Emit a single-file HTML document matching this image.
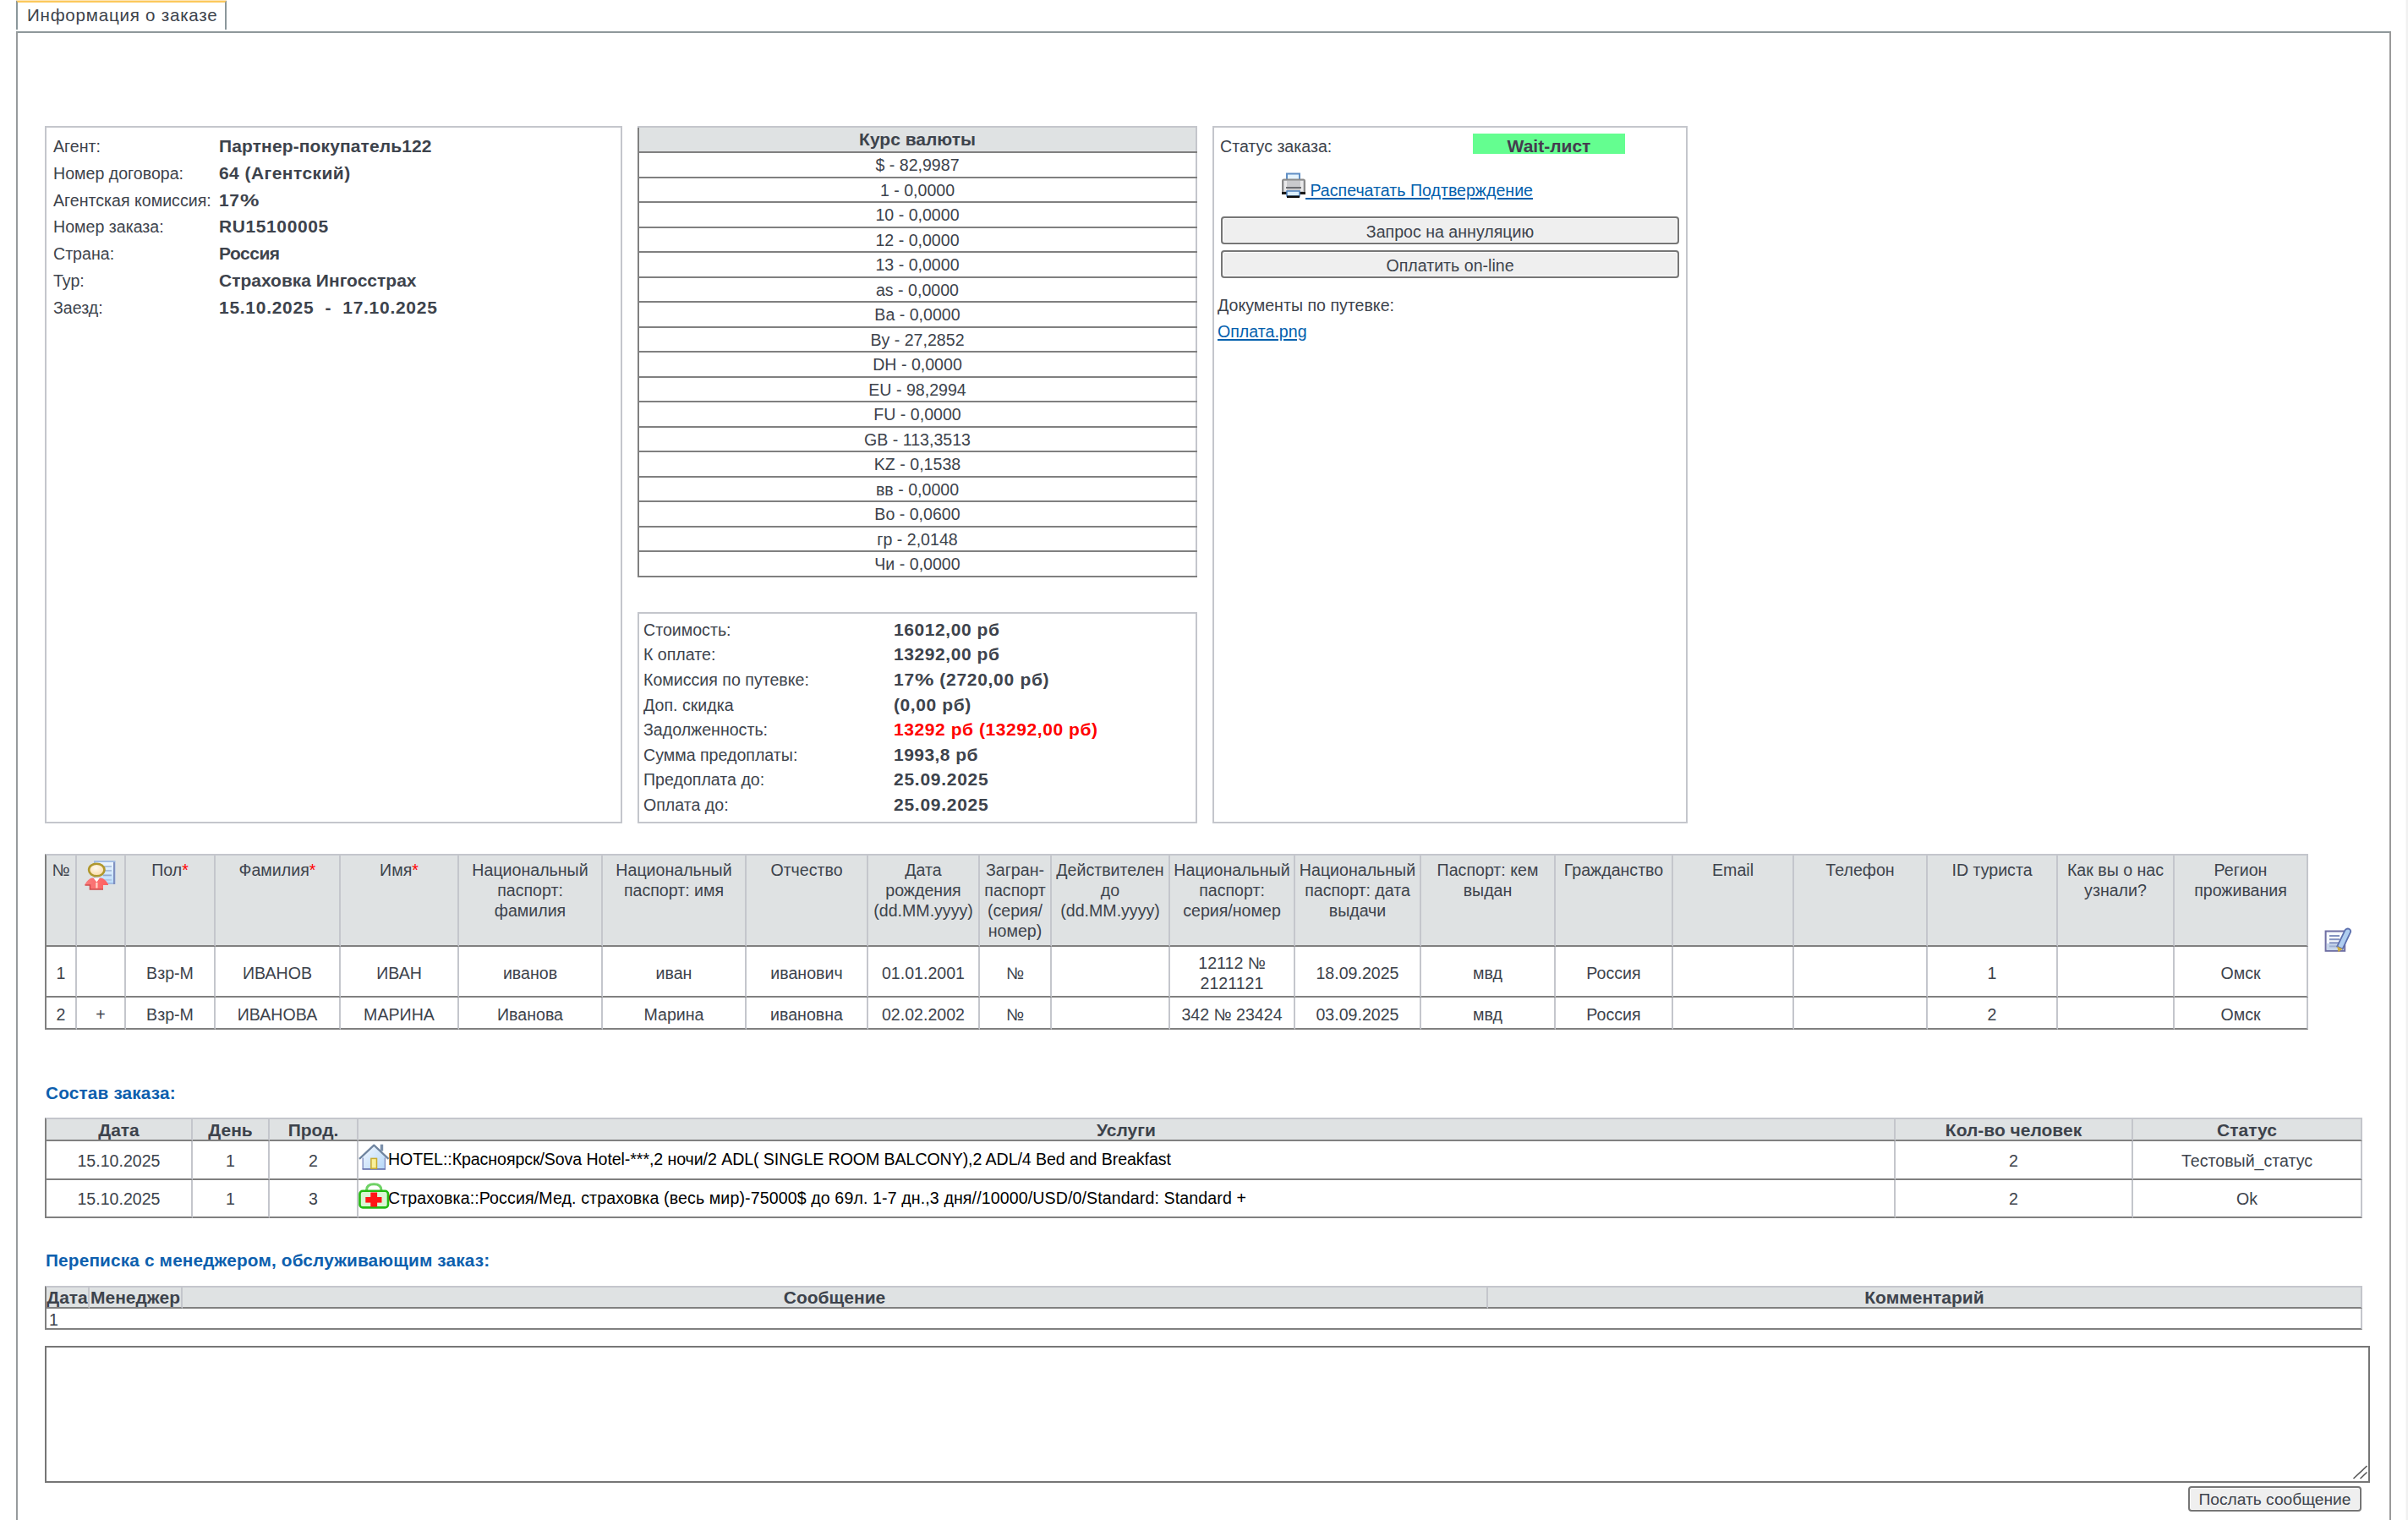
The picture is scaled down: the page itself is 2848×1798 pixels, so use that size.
<!DOCTYPE html>
<html><head><meta charset="utf-8">
<style>
*{box-sizing:border-box}
html,body{margin:0;padding:0;background:#fff;width:2848px;height:1798px;overflow:hidden}
body{font-family:"Liberation Sans",sans-serif;font-size:19.6px;color:#3d434c;position:relative}
.a{position:absolute;white-space:nowrap;line-height:30px}
.b{font-weight:bold;font-size:21px}
.box{position:absolute;border:2px solid #c4c6cc}
#tab{position:absolute;left:19px;top:0;width:249px;height:35px;border-left:2px solid #8b979b;border-right:2px solid #8b979b;border-top:3px solid #fcc95c}
#main{position:absolute;left:19px;top:37px;width:2809px;height:1900px;border:2px solid #8f989b;border-right-color:#9a9a9a;border-left-color:#979b9d}
table{border-collapse:collapse;position:absolute;table-layout:fixed}
td,th{padding:0;overflow:hidden}
.cur{left:754px;top:149px;width:662px;border-top:2px solid #c4c6cc;border-right:2px solid #c4c6cc;border-left:2px solid #808080}
.cur th{background:#dfe2e3;font-weight:bold;font-size:21px;height:30px;border-bottom:2px solid #808080;text-align:center}
.cur td{height:29.5px;border-bottom:2px solid #808080;text-align:center;padding-top:2px}
.btn{position:absolute;background:#efefef;border:2px solid #767676;border-radius:4px;box-shadow:inset 0 0 0 1px #fafafa;text-align:center;line-height:28px;white-space:nowrap}
a{color:#0360ad;text-decoration:underline;text-underline-offset:2px;text-decoration-thickness:2px}
.tg{position:absolute;border-left:2px solid #808080;border-top:2px solid #c4c6cc}
.r{display:flex}
.r>div{border-right:2px solid #c4c6cc;border-bottom:2px solid #808080;text-align:center;flex:none;overflow:hidden}
.hd>div{background:#dfe2e3}
.tt .hd>div{line-height:24px;padding-top:5px}
.tt .dr>div{display:flex;align-items:center;justify-content:center;line-height:24px;padding-top:3px}
.st .hd>div{font-weight:bold;font-size:21px;line-height:24px;padding-top:1px}
.st .dr>div{display:flex;align-items:center;justify-content:center;line-height:24px;padding-top:1px}
.sec{position:absolute;color:#0d5fae;font-weight:bold;font-size:20.8px;white-space:nowrap;line-height:24px;letter-spacing:0.15px}
</style></head><body>
<div id="tab"></div><div style="position:absolute;left:19px;top:0;width:249px;height:1px;background:#fde6b8"></div>
<div class="a" style="left:32px;top:3px;font-size:20.6px;letter-spacing:0.75px">Информация о заказе</div>
<div id="main"></div>
<div style="position:absolute;left:2845px;top:0;width:1px;height:1798px;background:#f8f8f8"></div><div style="position:absolute;left:2846px;top:0;width:2px;height:1798px;background:#f1f1f1"></div>

<!-- left info panel -->
<div class="box" style="left:53px;top:149px;width:683px;height:825px"></div>
<div class="a" style="left:63px;top:158px">Агент:</div><div class="a b" style="left:259px;top:158px;letter-spacing:0.12px">Партнер-покупатель122</div>
<div class="a" style="left:63px;top:190px">Номер договора:</div><div class="a b" style="left:259px;top:190px;letter-spacing:0.44px">64 (Агентский)</div>
<div class="a" style="left:63px;top:222px">Агентская комиссия:</div><div class="a b" style="left:259px;top:222px;letter-spacing:0.6px">17<span style="display:inline-block;transform:scaleX(1.2);transform-origin:0 0;margin-right:3.7px">%</span></div>
<div class="a" style="left:63px;top:253px">Номер заказа:</div><div class="a b" style="left:259px;top:253px;letter-spacing:0.6px">RU15100005</div>
<div class="a" style="left:63px;top:285px">Страна:</div><div class="a b" style="left:259px;top:285px;letter-spacing:-0.5px">Россия</div>
<div class="a" style="left:63px;top:317px">Тур:</div><div class="a b" style="left:259px;top:317px">Страховка Ингосстрах</div>
<div class="a" style="left:63px;top:349px">Заезд:</div><div class="a b" style="left:259px;top:349px;letter-spacing:0.72px">15.10.2025 &nbsp;- &nbsp;17.10.2025</div>

<!-- currency -->
<table class="cur">
<tr><th>Курс валюты</th></tr>
<tr><td>$ - 82,9987</td></tr>
<tr><td>1 - 0,0000</td></tr>
<tr><td>10 - 0,0000</td></tr>
<tr><td>12 - 0,0000</td></tr>
<tr><td>13 - 0,0000</td></tr>
<tr><td>as - 0,0000</td></tr>
<tr><td>Ba - 0,0000</td></tr>
<tr><td>By - 27,2852</td></tr>
<tr><td>DH - 0,0000</td></tr>
<tr><td>EU - 98,2994</td></tr>
<tr><td>FU - 0,0000</td></tr>
<tr><td>GB - 113,3513</td></tr>
<tr><td>KZ - 0,1538</td></tr>
<tr><td>вв - 0,0000</td></tr>
<tr><td>Bo - 0,0600</td></tr>
<tr><td>гр - 2,0148</td></tr>
<tr><td>Чи - 0,0000</td></tr>
</table>

<!-- cost box -->
<div class="box" style="left:754px;top:724px;width:662px;height:250px"></div>
<div class="a" style="left:761px;top:730px">Стоимость:</div><div class="a b" style="left:1057px;top:730px;letter-spacing:0.57px">16012,00 рб</div>
<div class="a" style="left:761px;top:759px">К оплате:</div><div class="a b" style="left:1057px;top:759px;letter-spacing:0.57px">13292,00 рб</div>
<div class="a" style="left:761px;top:789px">Комиссия по путевке:</div><div class="a b" style="left:1057px;top:789px;letter-spacing:0.7px">17<span style="display:inline-block;transform:scaleX(1.2);transform-origin:0 0;margin-right:3.7px">%</span> (2720,00 рб)</div>
<div class="a" style="left:761px;top:819px">Доп. скидка</div><div class="a b" style="left:1057px;top:819px;letter-spacing:0.6px">(0,00 рб)</div>
<div class="a" style="left:761px;top:848px">Задолженность:</div><div class="a b" style="left:1057px;top:848px;color:#ff0000;letter-spacing:0.57px">13292 рб (13292,00 рб)</div>
<div class="a" style="left:761px;top:878px">Сумма предоплаты:</div><div class="a b" style="left:1057px;top:878px;letter-spacing:0.45px">1993,8 рб</div>
<div class="a" style="left:761px;top:907px">Предоплата до:</div><div class="a b" style="left:1057px;top:907px;letter-spacing:0.73px">25.09.2025</div>
<div class="a" style="left:761px;top:937px">Оплата до:</div><div class="a b" style="left:1057px;top:937px;letter-spacing:0.73px">25.09.2025</div>

<!-- right panel -->
<div class="box" style="left:1434px;top:149px;width:562px;height:825px"></div>
<div class="a" style="left:1443px;top:158px">Статус заказа:</div>
<div style="position:absolute;left:1742px;top:158px;width:180px;height:24px;background:#64fe90"></div>
<div class="a b" style="left:1742px;top:158px;width:180px;text-align:center;color:#453c4f">Wait-лист</div>
<svg style="position:absolute;left:1514px;top:203px" width="32" height="32" viewBox="0 0 32 32">
 <rect x="8" y="2.5" width="15" height="9" fill="#e4f3fd" stroke="#5f8ec4" stroke-width="2"/>
 <rect x="3" y="9.5" width="26" height="16" rx="1.5" fill="#c9cacd" stroke="#8a8a8a" stroke-width="2"/>
 <rect x="5" y="11" width="3" height="12" fill="#e9e9ea"/><rect x="24" y="11" width="3" height="12" fill="#e9e9ea"/>
 <rect x="7" y="18" width="18" height="2" fill="#6a6c70"/>
 <rect x="2" y="24" width="28" height="3" fill="#1a1a1a"/>
 <rect x="8" y="23" width="15" height="6" fill="#dcefff" stroke="#4e83c0" stroke-width="1.5"/>
 <rect x="8" y="28.5" width="15" height="2.5" fill="#0b0b0b"/>
</svg>
<div class="a" style="left:1544px;top:210px"><a>&nbsp;Распечатать Подтверждение</a></div>
<div class="btn" style="left:1444px;top:256px;width:542px;height:33px;line-height:32px">Запрос на аннуляцию</div>
<div class="btn" style="left:1444px;top:296px;width:542px;height:33px;line-height:32px">Оплатить on-line</div>
<div class="a" style="left:1440px;top:346px">Документы по путевке:</div>
<div class="a" style="left:1440px;top:377px"><a>Оплата.png</a></div>

<!-- tourists table -->
<div class="tg tt" style="left:53px;top:1010px;width:2677px">
 <div class="r hd" style="height:108px">
  <div style="width:36px">№</div>
  <div style="width:58px"></div>
  <div style="width:106px">Пол<span style="color:#f00">*</span></div>
  <div style="width:148px">Фамилия<span style="color:#f00">*</span></div>
  <div style="width:140px">Имя<span style="color:#f00">*</span></div>
  <div style="width:170px">Национальный<br>паспорт:<br>фамилия</div>
  <div style="width:170px">Национальный<br>паспорт: имя</div>
  <div style="width:144px">Отчество</div>
  <div style="width:132px">Дата<br>рождения<br>(dd.MM.yyyy)</div>
  <div style="width:85px">Загран-<br>паспорт<br>(серия/<br>номер)</div>
  <div style="width:140px">Действителен<br>до<br>(dd.MM.yyyy)</div>
  <div style="width:148px">Национальный<br>паспорт:<br>серия/номер</div>
  <div style="width:149px">Национальный<br>паспорт: дата<br>выдачи</div>
  <div style="width:159px">Паспорт: кем<br>выдан</div>
  <div style="width:139px">Гражданство</div>
  <div style="width:143px">Email</div>
  <div style="width:158px">Телефон</div>
  <div style="width:154px">ID туриста</div>
  <div style="width:138px">Как вы о нас<br>узнали?</div>
  <div style="width:158px">Регион<br>проживания</div>
 </div>
 <div class="r dr" style="height:60px">
  <div style="width:36px">1</div><div style="width:58px"></div><div style="width:106px">Взр-М</div><div style="width:148px">ИВАНОВ</div><div style="width:140px">ИВАН</div><div style="width:170px">иванов</div><div style="width:170px">иван</div><div style="width:144px">иванович</div><div style="width:132px">01.01.2001</div><div style="width:85px">№</div><div style="width:140px"></div><div style="width:148px">12112 №<br>2121121</div><div style="width:149px">18.09.2025</div><div style="width:159px">мвд</div><div style="width:139px">Россия</div><div style="width:143px"></div><div style="width:158px"></div><div style="width:154px">1</div><div style="width:138px"></div><div style="width:158px">Омск</div>
 </div>
 <div class="r dr" style="height:38px">
  <div style="width:36px">2</div><div style="width:58px">+</div><div style="width:106px">Взр-М</div><div style="width:148px">ИВАНОВА</div><div style="width:140px">МАРИНА</div><div style="width:170px">Иванова</div><div style="width:170px">Марина</div><div style="width:144px">ивановна</div><div style="width:132px">02.02.2002</div><div style="width:85px">№</div><div style="width:140px"></div><div style="width:148px">342 № 23424</div><div style="width:149px">03.09.2025</div><div style="width:159px">мвд</div><div style="width:139px">Россия</div><div style="width:143px"></div><div style="width:158px"></div><div style="width:154px">2</div><div style="width:138px"></div><div style="width:158px">Омск</div>
 </div>
</div>
<!-- person icon -->
<svg style="position:absolute;left:100px;top:1017px" width="37" height="36" viewBox="0 0 37 36">
 <defs><linearGradient id="pg" x1="0" y1="0" x2="0" y2="1"><stop offset="0" stop-color="#eef5fe"/><stop offset="1" stop-color="#b9dcfb"/></linearGradient>
 <radialGradient id="fg" cx="0.45" cy="0.35" r="0.6"><stop offset="0" stop-color="#fffaf0"/><stop offset="1" stop-color="#fbdcaa"/></radialGradient>
 <linearGradient id="bg2" x1="0" y1="0" x2="1" y2="0"><stop offset="0" stop-color="#f77d7d"/><stop offset="1" stop-color="#ff6060"/></linearGradient></defs>
 <rect x="12" y="2" width="23.5" height="26" fill="url(#pg)" stroke="#a3bde3" stroke-width="2"/>
 <rect x="34" y="3" width="2" height="26" fill="#8090c0"/>
 <rect x="22" y="7" width="10" height="1.8" fill="#a9bedd"/><rect x="22" y="12" width="10" height="1.8" fill="#a9bedd"/><rect x="22" y="17.5" width="10" height="1.8" fill="#93a9d2"/><rect x="22" y="23" width="10" height="1.8" fill="#b0c8e6"/>
 <ellipse cx="14.3" cy="12" rx="9.2" ry="7.3" fill="url(#fg)" stroke="#b0982e" stroke-width="2.6"/>
 <path d="M9 21.5 L19.5 21.5 Q24.5 22.5 28 29 L28 30 L22 30 L22 35 L6.5 35 L6.5 30 L0.5 30 L0.5 29 Q4 22.5 9 21.5 Z" fill="url(#bg2)"/>
 <path d="M0.5 30 L6.5 30 L6.5 35 L22 35" fill="none" stroke="#d24c4c" stroke-width="1.6"/>
 <path d="M10.5 21.5 L14.3 26.5 L18 21.5 Z" fill="#ffffff"/>
 <rect x="13.3" y="27" width="2.2" height="6.5" fill="#ffd5c8"/>
</svg>
<!-- edit icon -->
<svg style="position:absolute;left:2746px;top:1096px" width="36" height="34" viewBox="0 0 36 34">
 <rect x="4.6" y="5.5" width="22.6" height="23.3" fill="#f6f9fd" stroke="#6e6ea3" stroke-width="2"/>
 <rect x="6" y="20" width="19.5" height="8" fill="#c6d5ea"/>
 <rect x="9" y="10" width="12" height="2" fill="#8392c0"/><rect x="9" y="14.2" width="12" height="2" fill="#8392c0"/><rect x="9" y="18.3" width="11" height="2" fill="#8392c0"/><rect x="9" y="22.4" width="9" height="2" fill="#9fb0d2"/>
 <path d="M27.6 4.2 Q30 1.6 32.6 3 Q35 4.6 33.8 7.2 L24.6 26.6 L18.2 23.6 Z" fill="#aecdf0" stroke="#5c6fae" stroke-width="1.8"/>
 <path d="M18.2 23.6 L24.6 26.6 L19.6 30.2 Z" fill="#cfae3c"/>
</svg>

<!-- services -->
<div class="sec" style="left:54px;top:1281px">Состав заказа:</div>
<div class="tg st" style="left:53px;top:1322px;width:2741px">
 <div class="r hd" style="height:26px">
  <div style="width:173px">Дата</div><div style="width:91px">День</div><div style="width:105px">Прод.</div><div style="width:1818px">Услуги</div><div style="width:281px">Кол-во человек</div><div style="width:271px">Статус</div>
 </div>
 <div class="r dr" style="height:46px">
  <div style="width:173px">15.10.2025</div><div style="width:91px">1</div><div style="width:105px">2</div>
  <div style="width:1818px;justify-content:flex-start!important;color:#000;padding-left:35px"><span style="position:relative;top:-1.5px;letter-spacing:-0.08px">HOTEL::Красноярск/Sova Hotel-***,2 ночи/2 ADL( SINGLE ROOM BALCONY),2 ADL/4 Bed and Breakfast</span></div>
  <div style="width:281px">2</div><div style="width:271px">Тестовый_статус</div>
 </div>
 <div class="r dr" style="height:45px">
  <div style="width:173px">15.10.2025</div><div style="width:91px">1</div><div style="width:105px">3</div>
  <div style="width:1818px;justify-content:flex-start!important;color:#000;padding-left:35px"><span style="position:relative;top:-1px;letter-spacing:0.11px">Страховка::Россия/Мед. страховка (весь мир)-75000$ до 69л. 1-7 дн.,3 дня//10000/USD/0/Standard: Standard +</span></div>
  <div style="width:281px">2</div><div style="width:271px">Ok</div>
 </div>
</div>


<!-- service icons -->
<svg style="position:absolute;left:424px;top:1352px" width="37" height="33" viewBox="0 0 37 33">
 <defs><linearGradient id="hg" x1="0" y1="0" x2="1" y2="1"><stop offset="0" stop-color="#f2f8ff"/><stop offset="1" stop-color="#b5d6f7"/></linearGradient></defs>
 <path d="M4.6 17 L18.3 4 L32 17 L32 31.2 L4.6 31.2 Z" fill="url(#hg)"/>
 <path d="M5.2 17.5 L5.2 30.6 L31.4 30.6 L31.4 17.5" fill="none" stroke="#7d89bd" stroke-width="1.3"/>
 <rect x="4.6" y="30" width="27.4" height="1.8" fill="#6f7bb2"/>
 <path d="M1 18.9 L18.3 2.6 L35.5 18.9" fill="none" stroke="#6f849f" stroke-width="2.2" stroke-linejoin="round"/>
 <rect x="25.8" y="1.7" width="3.4" height="7.8" fill="#7b90ab"/>
 <rect x="14.9" y="18.4" width="6.6" height="11.8" fill="#f9f09a" stroke="#c7aa2e" stroke-width="1.5"/>
</svg>
<svg style="position:absolute;left:424px;top:1398px" width="37" height="33" viewBox="0 0 37 33">
 <path d="M9.5 10 Q9.5 2.8 18.2 2.8 Q27 2.8 27 10" fill="none" stroke="#6fd266" stroke-width="3"/>
 <rect x="1.5" y="10.8" width="33.5" height="19.6" rx="3.5" fill="#d9f6d4" stroke="#22bb11" stroke-width="2.6"/>
 <rect x="14.3" y="12.5" width="7.8" height="17" fill="#ff1515"/>
 <rect x="8.3" y="18" width="19.2" height="6.6" fill="#ff1515"/>
</svg>

<!-- messages -->
<div class="sec" style="left:54px;top:1479px">Переписка с менеджером, обслуживающим заказ:</div>
<div class="tg st" style="left:53px;top:1521px;width:2741px">
 <div class="r hd" style="height:25px">
  <div style="width:51px;padding-top:0!important">Дата</div><div style="width:110px;padding-top:0!important">Менеджер</div><div style="width:1544px;padding-top:0!important">Сообщение</div><div style="width:1034px;padding-top:0!important">Комментарий</div>
 </div>
 <div class="r" style="height:25px">
  <div style="width:2739px;text-align:left;padding-left:3px;line-height:22px;padding-top:2px">1</div>
 </div>
</div>
<div style="position:absolute;left:53px;top:1592px;width:2750px;height:162px;border:2px solid #767676;background:#fff"></div>
<svg style="position:absolute;left:2780px;top:1730px" width="22" height="22" viewBox="0 0 22 22"><path d="M3.5 19 L19.5 4 M11.5 19 L19.5 11.5" stroke="#5a5a5a" stroke-width="1.6"/></svg>
<div class="btn" style="left:2588px;top:1758px;width:205px;height:30px;line-height:27px;font-size:19.2px">Послать сообщение</div>
</body></html>
